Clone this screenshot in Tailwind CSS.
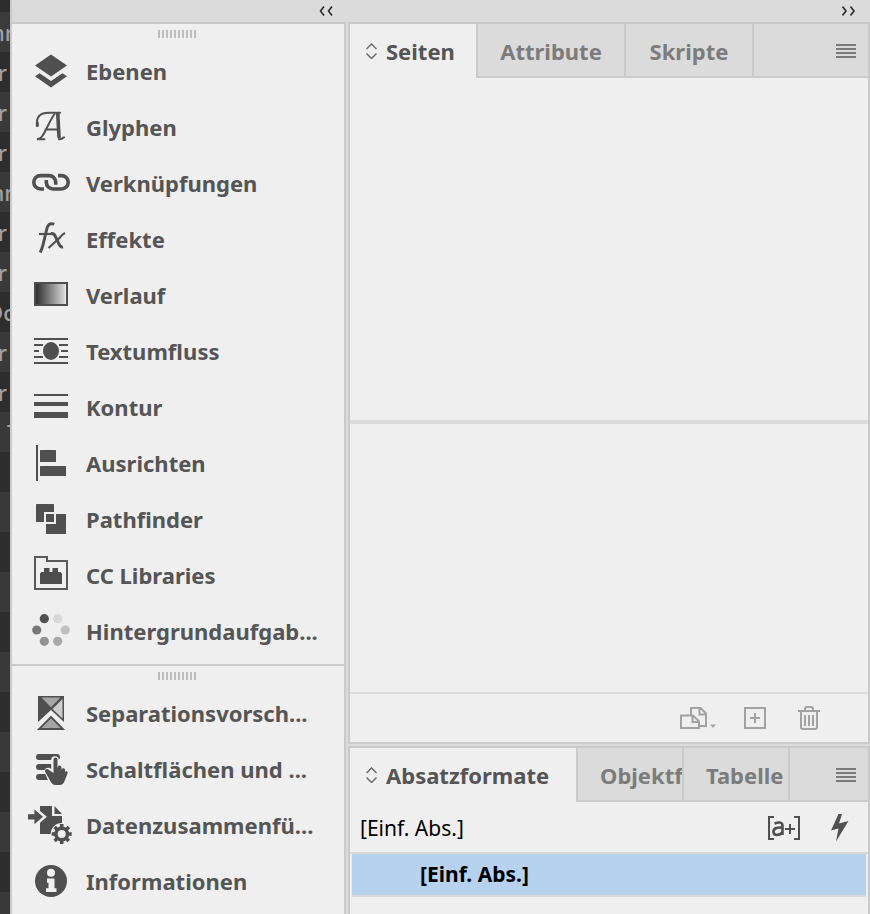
<!DOCTYPE html>
<html lang="de">
<head>
<meta charset="utf-8">
<meta name="viewport" content="width=device-width, initial-scale=1">
<title>Bedienfelder</title>
<script src="https://cdn.jsdelivr.net/npm/@tailwindcss/browser@4"></script>
</head>
<body class="h-screen overflow-hidden bg-[#dbdbdb] font-['Noto_Sans','Open_Sans',sans-serif] text-[22px] leading-7 text-[#555555]">
<div class="flex h-full">

  <!-- Document list behind the panels -->
  <div class="w-[10px] shrink-0 overflow-hidden bg-[#2d2d2d] pt-3 leading-10 font-medium text-[#a0a0a0]" aria-hidden="true">
    <div class="flex h-10 justify-end bg-[#3b3b3b]"><span class="-mr-1">nr</span></div>
    <div class="flex h-10 justify-end pr-[3px]">r</div>
    <div class="flex h-10 justify-end bg-[#393939] pr-[3px]">r</div>
    <div class="flex h-10 justify-end pr-[3px]">r</div>
    <div class="flex h-10 justify-end bg-[#393939]"><span class="-mr-2">nn</span></div>
    <div class="flex h-10 justify-end pr-[3px]">r</div>
    <div class="flex h-10 justify-end bg-[#393939] pr-[3px]">r</div>
    <div class="flex h-10 justify-end"><span class="-mr-1">Dc</span></div>
    <div class="flex h-10 justify-end bg-[#393939] pr-[3px]">r</div>
    <div class="flex h-10 justify-end pr-[3px]">r</div>
    <div class="flex h-10 justify-start bg-[#393939] pl-[7px]">T</div>
    <div class="h-10"></div><div class="h-10 bg-[#393939]"></div>
    <div class="h-10"></div><div class="h-10 bg-[#393939]"></div>
    <div class="h-10"></div><div class="h-10 bg-[#393939]"></div>
    <div class="h-10"></div><div class="h-10 bg-[#393939]"></div>
    <div class="h-10"></div><div class="h-10 bg-[#393939]"></div>
    <div class="h-10"></div><div class="h-10 bg-[#393939]"></div>
  </div>

  <!-- Icon dock -->
  <aside class="flex w-[336px] shrink-0 flex-col border-l-2 border-[#cacaca]">
    <header class="flex h-[22px] shrink-0 items-center justify-end pr-[13px]">
      <button type="button" aria-label="Bedienfelder erweitern" class="block"><svg class="block" width="14" height="10" fill="none" stroke="#2b2b2b" stroke-width="1.600"><path d="M5 0.500 1.500 5l3.500 4.500M13 0.500 9.500 5l3.500 4.500"/></svg></button>
    </header>
    <div class="flex flex-1 flex-col border-t-2 border-r-2 border-[#cacaca] bg-[#efefef] font-bold">
      <section class="border-b-2 border-[#cacaca] pb-1">
        <div class="flex h-5 items-center justify-center pr-0.5"><svg class="block" width="38" height="8"><path d="M1 0v8m4-8v8m4-8v8m4-8v8m4-8v8m4-8v8m4-8v8m4-8v8m4-8v8m4-8v8" stroke="#bcbcbc" stroke-width="2"/></svg></div>
        <button type="button" class="flex h-14 w-full items-center gap-[13px] pl-[17px] text-left">
          <svg class="block shrink-0" width="44" height="44" fill="#505050"><path d="M22 4.500 38 15.500 22 26.500 6 15.500zM6 26.200l4.500-3L22 31l11.500-7.800 4.500 3L22 37.500z"/></svg><span class="pb-0.5">Ebenen</span></button>
        <button type="button" class="flex h-14 w-full items-center gap-[13px] pl-[17px] text-left">
          <svg class="block shrink-0" width="44" height="44" fill="none" stroke="#505050" stroke-linecap="round"><path d="M8.500 19.500C6.500 11 11 6.800 20 6.800h11" stroke-width="2"/><path d="M8.300 17v2.500" stroke-width="3"/><path d="M25.500 8C21 14 17 25 13 30.500q-1.500 2-5 2.800h7.500M16.500 23.500h13" stroke-width="2"/><path d="M28.800 8 30 31" stroke-width="3.600"/><path d="M30 33.300q2.500.2 5-2" stroke-width="2"/></svg><span class="pb-0.5">Glyphen</span></button>
        <button type="button" class="flex h-14 w-full items-center gap-[13px] pl-[17px] text-left">
          <svg class="block shrink-0" width="44" height="44" fill="none" stroke="#505050" stroke-width="3.600"><path d="M15 27H11.500a6.700 6.700 0 0 1 0-13.400H20a6.700 6.700 0 0 1 6.700 6.700v2.400"/><path d="M29 13.600h3.500a6.700 6.700 0 0 1 0 13.400H24a6.700 6.700 0 0 1-6.700-6.700v-2.400"/></svg><span class="pb-0.5">Verknüpfungen</span></button>
        <button type="button" class="flex h-14 w-full items-center gap-[13px] pl-[17px] text-left">
          <svg class="block shrink-0" width="44" height="44" fill="none" stroke="#505050"><path d="M25.300 6.200C20.500 4.500 18.500 7 17.500 12L14 27q-1 4-2.800 7.500" stroke-width="3"/><path d="M10 16h13.500" stroke-width="2.200"/><path d="M22 15.700q3-.8 4.500 3L30 26q1.500 3.500 4 3" stroke-width="3"/><path d="M36 15q-2.500 1-5.500 5L19.500 30" stroke-width="2.200"/></svg><span class="pb-0.5">Effekte</span></button>
        <button type="button" class="flex h-14 w-full items-center gap-[13px] pl-[17px] text-left">
          <svg class="block shrink-0" width="44" height="44"><defs><linearGradient id="verlauf"><stop offset="0" stop-color="#2f2f2f"/><stop offset="1" stop-color="#dadada"/></linearGradient></defs><path d="M6 9h32v22H6z" fill="#efefef" stroke="#4d4d4d" stroke-width="2"/><path d="M7 10h29v20H7z" fill="url(#verlauf)"/></svg><span class="pb-0.5">Verlauf</span></button>
        <button type="button" class="flex h-14 w-full items-center gap-[13px] pl-[17px] text-left">
          <svg class="block shrink-0" width="44" height="44" stroke="#505050" stroke-width="2"><path d="M5 9h34M5 15h9m16 0h9M5 21h5m22 0h7M5 27h9m16 0h9M5 33h34"/><ellipse cx="22" cy="21" rx="7" ry="8" fill="#505050"/></svg><span class="pb-0.5">Textumfluss</span></button>
        <button type="button" class="flex h-14 w-full items-center gap-[13px] pl-[17px] text-left">
          <svg class="block shrink-0" width="44" height="44" fill="#505050"><path d="M5 8h34v2H5zM5 16h34v4H5zM5 26h34v6H5z"/></svg><span class="pb-0.5">Kontur</span></button>
        <button type="button" class="flex h-14 w-full items-center gap-[13px] pl-[17px] text-left">
          <svg class="block shrink-0" width="44" height="44" fill="#505050"><path d="M7 3h2v36H7z"/><rect x="11" y="8" width="16" height="12" rx=".5"/><rect x="11" y="24" width="26" height="10" rx=".5"/></svg><span class="pb-0.5">Ausrichten</span></button>
        <button type="button" class="flex h-14 w-full items-center gap-[13px] pl-[17px] text-left">
          <svg class="block shrink-0" width="44" height="44" fill="#505050"><rect x="7" y="6" width="18" height="18" rx=".5"/><rect x="17" y="16" width="20" height="20" rx=".5"/><rect x="16" y="15" width="10" height="10" stroke="#efefef" stroke-width="2"/></svg><span class="pb-0.5">Pathfinder</span></button>
        <button type="button" class="flex h-14 w-full items-center gap-[13px] pl-[17px] text-left">
          <svg class="block shrink-0" width="44" height="44"><path d="M6 3h12v4h20v28H6z" fill="none" stroke="#5a5a5a" stroke-width="2"/><path d="M11 30V19.500l1.500-1.500H15v-4h5.500v4h3v-4H29v4h2.500l1.500 1.500V30z" fill="#4d4d4d"/></svg><span class="pb-0.5">CC Libraries</span></button>
        <button type="button" class="flex h-14 w-full items-center gap-[13px] pl-[17px] text-left">
          <svg class="block shrink-0" width="44" height="44"><circle cx="15.300" cy="8.700" r="4.600" fill="#505050"/><circle cx="28.700" cy="8.700" r="4.600" fill="#d8d8d8"/><circle cx="7.700" cy="20" r="4.600" fill="#787878"/><circle cx="36.300" cy="20" r="4.600" fill="#c0c0c0"/><circle cx="15.300" cy="31.300" r="4.600" fill="#929292"/><circle cx="28.700" cy="31.300" r="4.600" fill="#a9a9a9"/></svg><span class="pb-0.5">Hintergrundaufgab...</span></button>
      </section>
      <section>
        <div class="flex h-5 items-center justify-center pr-0.5"><svg class="block" width="38" height="8"><path d="M1 0v8m4-8v8m4-8v8m4-8v8m4-8v8m4-8v8m4-8v8m4-8v8m4-8v8m4-8v8" stroke="#bcbcbc" stroke-width="2"/></svg></div>
        <button type="button" class="flex h-14 w-full items-center gap-[13px] pl-[17px] text-left">
          <svg class="block shrink-0" width="44" height="44"><path d="M9 4h26v26L22 18 9 30z" fill="#505050"/><path d="M12.500 5.500h19L22 15.200z" fill="#a6a6a6"/><path d="M33.500 7v19.500L23.500 17z" fill="#cdcdcd"/><path d="M22 25 34 37H10z" fill="#a3a3a3" stroke="#505050" stroke-width="1.800"/></svg><span class="pb-0.5">Separationsvorsch...</span></button>
        <button type="button" class="flex h-14 w-full items-center gap-[13px] pl-[17px] text-left">
          <svg class="block shrink-0" width="44" height="44"><g stroke="#505050" stroke-width="6" stroke-linecap="round"><path d="M10 9h18M10 19h13M10 29h10"/></g><path d="M24 24V12a2 2 0 0 1 4 0v8l2-1.500 2 2 2-1.200 1.500 2.500 1-1.200q1.200.4.200 4l-2 5.500q-1.500 5.500-5 5.500h-4q-2.500 0-5-4l-3.500-8q-.5-2 2.500-2z" fill="#505050" stroke="#efefef" stroke-width="3.600" stroke-linejoin="round"/><path d="M24.500 25V11.500a2 2 0 0 1 4 0v8.500l1-2.500q2.500-.5 3 2l.300 3 .800-2.500q2.500 0 2.500 2v2.500l1-1.500q2.200.5 1.200 3l-2.500 6.500q-1.500 4.500-5.500 4.500h-4q-3 0-5-4l-4.800-8.500q-1.500-3 1.500-3.500 1.500 0 3 1.800z" fill="#505050"/></svg><span class="pb-0.5">Schaltflächen und ...</span></button>
        <button type="button" class="flex h-14 w-full items-center gap-[13px] pl-[17px] text-left">
          <svg class="block shrink-0 overflow-visible" width="44" height="44"><path d="M11 2h12v10h10v18H11z" fill="#505050"/><path d="M25.500 2 33 10h-7.500z" fill="#505050"/><path d="M-1 10.300h6.500V5.500L14 12.700l-8.500 7.600v-4.900H-1z" fill="#505050" stroke="#efefef" stroke-width="5" paint-order="stroke"/><circle cx="32.700" cy="30" r="11" fill="#efefef"/><path d="M32.700 20v20M22.700 30h20M25.600 22.900l14.200 14.200M39.800 22.900 25.600 37.100" stroke="#505050" stroke-width="3.600"/><circle cx="32.700" cy="30" r="5.800" fill="#efefef" stroke="#505050" stroke-width="3.600"/></svg><span class="pb-0.5">Datenzusammenfü...</span></button>
        <button type="button" class="flex h-14 w-full items-center gap-[13px] pl-[17px] text-left">
          <svg class="block shrink-0" width="44" height="44"><circle cx="22" cy="21" r="16" fill="#505050"/><g fill="#f2f2f2"><circle cx="22" cy="12.700" r="4"/><path d="M18 18.500h7.500v9.800h2V32H17v-3.700h2.500v-5.500H18z"/></g></svg><span class="pb-0.5">Informationen</span></button>
      </section>
    </div>
  </aside>

  <!-- Expanded panels -->
  <main class="ml-0.5 flex min-w-0 flex-1 flex-col">
    <header class="flex h-[22px] shrink-0 items-center justify-end pr-[14px]">
      <button type="button" aria-label="Auf Symbole minimieren" class="block"><svg class="block" width="14" height="10" fill="none" stroke="#2b2b2b" stroke-width="1.600"><path d="M0.500 0.500 4 5 0.500 9.500M8.500 0.500 12 5 8.500 9.500"/></svg></button>
    </header>

    <section class="shrink-0 border-2 border-[#cacaca] bg-[#efefef]">
      <div class="flex h-[54px] font-bold text-[#7c7c7c]" role="tablist">
        <button type="button" role="tab" aria-selected="true" class="flex w-[126px] shrink-0 items-center gap-[9px] pl-4 text-[#555555]"><svg class="block shrink-0" width="11" height="16" fill="none" stroke="#6c6c6c" stroke-width="1.500"><path d="M.5 6l5-5 5 5M.5 10.500l5 5 5-5"/></svg>Seiten</button>
        <button type="button" role="tab" aria-selected="false" class="w-[150px] shrink-0 border-x-2 border-b-2 border-[#cacaca] bg-[#dbdbdb] pt-0.5">Attribute</button>
        <button type="button" role="tab" aria-selected="false" class="w-32 shrink-0 border-r-2 border-b-2 border-[#cacaca] bg-[#dbdbdb] pt-0.5">Skripte</button>
        <div class="flex flex-1 items-center justify-end border-b-2 border-[#cacaca] bg-[#dbdbdb] pt-0.5 pr-3">
          <button type="button" aria-label="Bedienfeldmenü" class="block"><svg class="block" width="20" height="14"><path d="M0 1h20M0 5h20M0 9h20M0 13h20" stroke="#7a7a7a" stroke-width="2"/></svg></button>
        </div>
      </div>
      <div class="h-[342px]"></div>
      <div class="h-[272px] border-t-4 border-[#dcdcdc]"></div>
      <footer class="flex h-[50px] items-center justify-end gap-7 border-t-2 border-[#dcdcdc] pr-12 text-[#a2a2a2]">
        <button type="button" aria-label="Seitenformat bearbeiten" class="block"><svg class="block" width="36" height="24" fill="none" stroke="currentColor" stroke-width="2"><path d="M1 9.500h12l6 6V22H1zM12.500 10v6H19M11 9V2h9.500l5.500 5.500V20h-6M19.500 2v6.500H26"/><path d="M30 18.500h6L33 22z" fill="currentColor" stroke="none"/></svg></button>
        <button type="button" aria-label="Neue Seite erstellen" class="block"><svg class="block" width="22" height="22" fill="none" stroke="currentColor" stroke-width="2"><path d="M1 1h20v20H1zM11 6v10M6 11h10"/></svg></button>
        <button type="button" aria-label="Ausgewählte Seiten löschen" class="ml-1 block"><svg class="block" width="22" height="24" fill="none" stroke="currentColor" stroke-width="2"><path d="M0 5h22M3 5v16q0 2 2 2h12q2 0 2-2V5M7 5V3q0-2 2-2h4q2 0 2 2v2M7 9v11M11 9v11M15 9v11"/></svg></button>
      </footer>
    </section>

    <section class="mt-0.5 flex flex-1 flex-col border-x-2 border-t-2 border-[#cacaca] bg-[#efefef]">
      <div class="flex h-[54px] shrink-0 font-bold text-[#7c7c7c]" role="tablist">
        <button type="button" role="tab" aria-selected="true" class="flex w-[226px] shrink-0 items-center gap-[9px] pl-4 text-[#555555]"><svg class="block shrink-0" width="11" height="16" fill="none" stroke="#6c6c6c" stroke-width="1.500"><path d="M.5 6l5-5 5 5M.5 10.500l5 5 5-5"/></svg>Absatzformate</button>
        <button type="button" role="tab" aria-selected="false" class="w-[108px] shrink-0 overflow-hidden border-x-2 border-b-2 border-[#cacaca] bg-[#dbdbdb] pt-0.5 pl-[22px] text-left whitespace-nowrap">Objektf</button>
        <button type="button" role="tab" aria-selected="false" class="w-[106px] shrink-0 overflow-hidden border-r-2 border-b-2 border-[#cacaca] bg-[#dbdbdb] pt-0.5 pl-[22px] text-left whitespace-nowrap">Tabelle</button>
        <div class="flex flex-1 items-center justify-end border-b-2 border-[#cacaca] bg-[#dbdbdb] pt-0.5 pr-3">
          <button type="button" aria-label="Bedienfeldmenü" class="block"><svg class="block" width="20" height="14"><path d="M0 1h20M0 5h20M0 9h20M0 13h20" stroke="#7a7a7a" stroke-width="2"/></svg></button>
        </div>
      </div>
      <div class="flex h-[50px] shrink-0 items-center gap-[30px] pt-0.5 pr-[19px] pl-[10px] text-[21px] text-black">
        <span class="flex-1">[Einf. Abs.]</span>
        <button type="button" aria-label="Formatabweichungen hervorheben" class="block"><svg class="block" width="34" height="26" fill="none" stroke="#505050" stroke-width="2"><path d="M7 2H2v22h5M27 2h5v22h-5M18 14h10M23 9v10"/><path d="M7.500 8.500q8-3 8 2.500v9M15.500 12.500q-9-.5-9 4.200 0 3.300 3.500 3.300 3.500 0 5.500-3" stroke-width="2.600"/></svg></button>
        <button type="button" aria-label="Abweichungen löschen" class="block"><svg class="block" width="18" height="28"><path d="M7.500 0H11L8 9.500l9.500-2.500L5 27.500l2.500-13L0 16.500z" fill="#505050"/></svg></button>
      </div>
      <ul class="border-t-2 border-[#d9d9d9] px-0.5 text-[21px] font-bold text-black">
        <li class="flex h-[43px] items-center border-b-2 border-[#d9d9d9] bg-[#b6d2ee] pb-0.5 pl-[68px]">[Einf. Abs.]</li>
      </ul>
    </section>
  </main>
</div>
</body>
</html>
